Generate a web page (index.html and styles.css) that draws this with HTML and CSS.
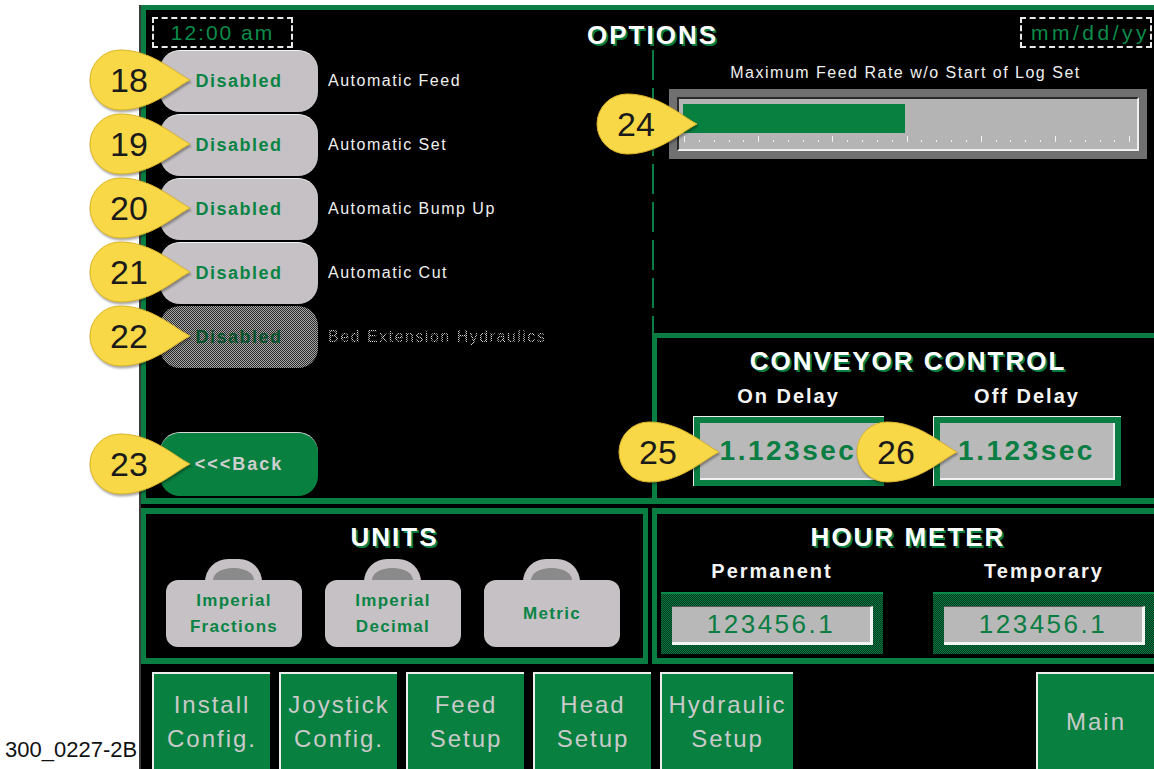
FILE: index.html
```html
<!DOCTYPE html>
<html lang="en">
<head>
<meta charset="utf-8">
<title>Options</title>
<link rel="stylesheet" href="styles.css">
</head>
<body>
<div class="page">
  <div class="caption">300_0227-2B</div>
  <div class="screen">
    <section class="options">
      <header class="opt-head">
        <div class="stamp time">12:00 am</div>
        <h1 class="title">OPTIONS</h1>
        <div class="stamp date">mm/dd/yy</div>
      </header>
      <div class="opt-body">
        <div class="opt-left">
          <div class="opt-row"><div class="pill">Disabled</div><span class="opt-label">Automatic Feed</span></div>
          <div class="opt-row"><div class="pill">Disabled</div><span class="opt-label">Automatic Set</span></div>
          <div class="opt-row"><div class="pill">Disabled</div><span class="opt-label">Automatic Bump Up</span></div>
          <div class="opt-row"><div class="pill">Disabled</div><span class="opt-label">Automatic Cut</span></div>
          <div class="opt-row"><div class="pill pill-off"><span class="dither-text-dark">Disabled</span></div><span class="opt-label dither-text">Bed Extension Hydraulics</span></div>
          <div class="back">&lt;&lt;&lt;Back</div>
        </div>
        <div class="opt-right">
          <div class="feed">
            <div class="feed-label">Maximum Feed Rate w/o Start of Log Set</div>
            <div class="slider">
              <div class="slider-track">
                <div class="slider-fill" style="width:49.3%"></div>
                <div class="ticks"></div>
              </div>
            </div>
          </div>
          <div class="conveyor">
            <h2 class="title">CONVEYOR CONTROL</h2>
            <div class="delays">
              <div class="delay d-on">
                <div class="sub">On Delay</div>
                <div class="valbox"><div class="val">1.123sec</div></div>
              </div>
              <div class="delay d-off">
                <div class="sub">Off Delay</div>
                <div class="valbox"><div class="val">1.123sec</div></div>
              </div>
            </div>
          </div>
        </div>
      </div>
    </section>

    <div class="lower">
      <section class="units">
        <h2 class="title">UNITS</h2>
        <div class="unit-row">
          <div class="unit">Imperial<br>Fractions</div>
          <div class="unit">Imperial<br>Decimal</div>
          <div class="unit">Metric</div>
        </div>
      </section>
      <section class="hours">
        <h2 class="title">HOUR METER</h2>
        <div class="meters">
          <div class="meter">
            <div class="sub">Permanent</div>
            <div class="meter-frame"><div class="meter-val">123456.1</div></div>
          </div>
          <div class="meter">
            <div class="sub">Temporary</div>
            <div class="meter-frame"><div class="meter-val">123456.1</div></div>
          </div>
        </div>
      </section>
    </div>

    <nav class="nav">
      <div class="nav-btn w118">Install<br>Config.</div>
      <div class="nav-btn w118">Joystick<br>Config.</div>
      <div class="nav-btn w118">Feed<br>Setup</div>
      <div class="nav-btn w118">Head<br>Setup</div>
      <div class="nav-btn w133">Hydraulic<br>Setup</div>
      <div class="nav-btn w118 main">Main</div>
    </nav>
  </div>

  <div class="callout c18"><svg viewBox="0 0 101 62" width="101" height="62"><path d="M101 31 C84 22 62 1 31 1 A30 30 0 0 0 31 61 C62 61 84 40 101 31 Z"/></svg><span>18</span></div>
  <div class="callout c19"><svg viewBox="0 0 101 62" width="101" height="62"><path d="M101 31 C84 22 62 1 31 1 A30 30 0 0 0 31 61 C62 61 84 40 101 31 Z"/></svg><span>19</span></div>
  <div class="callout c20"><svg viewBox="0 0 101 62" width="101" height="62"><path d="M101 31 C84 22 62 1 31 1 A30 30 0 0 0 31 61 C62 61 84 40 101 31 Z"/></svg><span>20</span></div>
  <div class="callout c21"><svg viewBox="0 0 101 62" width="101" height="62"><path d="M101 31 C84 22 62 1 31 1 A30 30 0 0 0 31 61 C62 61 84 40 101 31 Z"/></svg><span>21</span></div>
  <div class="callout c22"><svg viewBox="0 0 101 62" width="101" height="62"><path d="M101 31 C84 22 62 1 31 1 A30 30 0 0 0 31 61 C62 61 84 40 101 31 Z"/></svg><span>22</span></div>
  <div class="callout c23"><svg viewBox="0 0 101 62" width="101" height="62"><path d="M101 31 C84 22 62 1 31 1 A30 30 0 0 0 31 61 C62 61 84 40 101 31 Z"/></svg><span>23</span></div>
  <div class="callout c24"><svg viewBox="0 0 101 62" width="101" height="62"><path d="M101 31 C84 22 62 1 31 1 A30 30 0 0 0 31 61 C62 61 84 40 101 31 Z"/></svg><span>24</span></div>
  <div class="callout c25"><svg viewBox="0 0 101 62" width="101" height="62"><path d="M101 31 C84 22 62 1 31 1 A30 30 0 0 0 31 61 C62 61 84 40 101 31 Z"/></svg><span>25</span></div>
  <div class="callout c26"><svg viewBox="0 0 101 62" width="101" height="62"><path d="M101 31 C84 22 62 1 31 1 A30 30 0 0 0 31 61 C62 61 84 40 101 31 Z"/></svg><span>26</span></div>
</div>
</body>
</html>
```

FILE: styles.css
```css
html, body {
  margin: 0;
  padding: 0;
  overflow: hidden;
  background: #fff;
}
body {
  width: 1154px;
  height: 769px;
  font-family: "Liberation Sans", Arial, sans-serif;
}
.page {
  position: relative;
  display: flex;
  width: 1154px;
  height: 769px;
}
.caption {
  flex: none;
  width: 134px;
  padding-left: 5px;
  align-self: flex-end;
  margin-bottom: 6px;
  font-size: 22px;
  line-height: 26px;
  color: #111;
  white-space: nowrap;
}
.screen {
  flex: none;
  width: 1025px;
  height: 764px;
  margin-top: 5px;
  box-sizing: border-box;
  background: #000;
  border-left: 2px solid #3a3a3a;
  display: flex;
  flex-direction: column;
}

/* ---------- generic ---------- */
.title {
  margin: 0;
  font-size: 26px;
  line-height: 30px;
  font-weight: bold;
  letter-spacing: 2px;
  color: #fff;
  text-align: center;
  text-shadow: 2px 2px 0 #0a7d43;
}
.sub {
  font-size: 20px;
  line-height: 24px;
  font-weight: bold;
  letter-spacing: 2px;
  color: #f4f4f4;
  text-align: center;
}

/* ---------- options ---------- */
.options {
  flex: none;
  height: 499px;
  box-sizing: border-box;
  border: 5px solid #0a7d43;
  border-bottom-width: 6px;
  display: flex;
  flex-direction: column;
}
.opt-head {
  flex: none;
  height: 40px;
  display: grid;
  grid-template-columns: 1fr auto 1fr;
  align-items: start;
}
.stamp {
  box-sizing: border-box;
  height: 31px;
  margin-top: 7px;
  border: 2px dashed #e8e8e8;
  color: #0b8c4a;
  font-size: 21px;
  line-height: 27px;
  text-align: center;
}
.time {
  width: 141px;
  margin-left: 6px;
  letter-spacing: 2px;
}
.date {
  width: 132px;
  justify-self: end;
  margin-right: 7px;
  letter-spacing: 3.5px;
  text-align: right;
  padding-right: 0;
}
.opt-head .title {
  margin-top: 10px;
}
.opt-body {
  flex: 1;
  display: grid;
  grid-template-columns: 506px 1fr;
}
.opt-left {
  padding-left: 14px;
  display: flex;
  flex-direction: column;
  gap: 2px;
}
.opt-row {
  height: 62px;
  display: flex;
  align-items: center;
}
.pill {
  flex: none;
  box-sizing: border-box;
  width: 158px;
  height: 62px;
  border-radius: 20px;
  background: #c5c1c5;
  border-top: 1px solid #f2f2f2;
  display: flex;
  align-items: center;
  justify-content: center;
  color: #0a8444;
  font-size: 18px;
  font-weight: bold;
  letter-spacing: 1.5px;
}
.pill-off {
  background: repeating-conic-gradient(#a4a4a4 0 25%, #2c2c2c 0 50%) 0 0 / 2px 2px;
  border-top: none;
}
.dither-text-dark {
  color: #06542c;
}
.opt-label {
  margin-left: 10px;
  color: #f0f0f0;
  font-size: 16px;
  letter-spacing: 1.5px;
  white-space: nowrap;
}
.dither-text {
  color: transparent;
  background: repeating-conic-gradient(#dcdcdc 0 25%, #000 0 50%) 0 0 / 2px 2px;
  -webkit-background-clip: text;
  background-clip: text;
}
.back {
  margin-top: 62px;
  box-sizing: border-box;
  width: 158px;
  height: 64px;
  border-radius: 20px;
  background: #088040;
  border-top: 1px solid #d8d8d8;
  display: flex;
  align-items: center;
  justify-content: center;
  color: #cfcfcf;
  font-size: 18px;
  font-weight: bold;
  letter-spacing: 2px;
}
.opt-right {
  display: flex;
  flex-direction: column;
}
.feed {
  flex: none;
  height: 283px;
  box-sizing: border-box;
  padding-top: 13px;
  background: repeating-linear-gradient(to bottom, #0a7d43 0 30px, transparent 30px 38px) 0 0 / 2px 100% no-repeat;
}
.feed-label {
  color: #f0f0f0;
  font-size: 16px;
  line-height: 20px;
  letter-spacing: 1.5px;
  text-align: center;
}
.slider {
  box-sizing: border-box;
  height: 70px;
  margin: 6px 12px 0 17px;
  padding: 8px;
  background: #707070;
}
.slider-track {
  box-sizing: border-box;
  height: 100%;
  padding: 5px 4px 0;
  background: #b4b4b4;
  border-top: 2px solid #2a2a2a;
  border-left: 2px solid #2a2a2a;
  border-bottom: 2px solid #f0f0f0;
  border-right: 2px solid #f0f0f0;
}
.slider-fill {
  height: 29px;
  background: #088040;
}
.ticks {
  height: 6px;
  margin-top: 3px;
  background:
    repeating-linear-gradient(to right, #f4f4f4 0 1px, transparent 1px 74.2px) 1px 0 / 100% 6px no-repeat,
    repeating-linear-gradient(to right, #f4f4f4 0 1px, transparent 1px 14.84px) 1px 4px / 100% 2px no-repeat;
}
.conveyor {
  flex: 1;
  box-sizing: border-box;
  border-top: 5px solid #0a7d43;
  border-left: 5px solid #0a7d43;
  padding-top: 8px;
}
.delays {
  display: flex;
  gap: 49px;
  padding-left: 36px;
  margin-top: 8px;
}
.d-on { width: 191px; }
.d-off { width: 188px; }
.valbox {
  margin-top: 8px;
  box-sizing: border-box;
  height: 70px;
  padding: 6px;
  background: #0a7d43;
  border-top: 1px solid #eee;
  border-left: 1px solid #eee;
}
.val {
  box-sizing: border-box;
  height: 100%;
  background: #b9b9b9;
  border-right: 2px solid #efefef;
  border-bottom: 2px solid #efefef;
  display: flex;
  align-items: center;
  justify-content: center;
  color: #0a7d43;
  font-size: 28px;
  font-weight: bold;
  letter-spacing: 2.5px;
}

/* ---------- lower ---------- */
.lower {
  flex: none;
  height: 156px;
  margin-top: 4px;
  display: flex;
  gap: 4px;
}
.units, .hours {
  box-sizing: border-box;
  border: 5px solid #0a7d43;
  border-top-width: 6px;
  border-bottom-width: 6px;
  padding-top: 8px;
}
.units {
  flex: none;
  width: 507px;
}
.hours {
  flex: 1;
}
.unit-row {
  display: flex;
  gap: 23px;
  padding-left: 20px;
  margin-top: 8px;
  padding-top: 20px;
}
.unit {
  position: relative;
  box-sizing: border-box;
  width: 136px;
  height: 67px;
  border-radius: 12px;
  background: #c5c1c5;
  display: flex;
  align-items: center;
  justify-content: center;
  text-align: center;
  color: #0a8444;
  font-size: 17px;
  line-height: 26px;
  font-weight: bold;
  letter-spacing: 1.3px;
}
.unit::before {
  content: "";
  position: absolute;
  left: 39px;
  top: -21px;
  width: 57px;
  height: 23px;
  border-radius: 28px 28px 0 0;
  background: #c5c1c5;
}
.unit::after {
  content: "";
  position: absolute;
  left: 47px;
  top: -12px;
  width: 41px;
  height: 12px;
  border-radius: 20px 20px 0 0 / 12px 12px 0 0;
  background: #8a8a8a;
}
.meters {
  display: flex;
  gap: 50px;
  padding-left: 4px;
  margin-top: 7px;
}
.meter { width: 222px; }
.meter-frame {
  margin-top: 9px;
  box-sizing: border-box;
  height: 62px;
  padding: 12px 10px 9px 11px;
  background: repeating-conic-gradient(#0b7d43 0 25%, #03361c 0 50%) 0 0 / 2px 2px;
  border-top: 2px solid #0a8a4a;
}
.meter-val {
  box-sizing: border-box;
  height: 100%;
  background: #b8b8b8;
  border-top: 1px solid #555;
  border-right: 3px solid #f4f4f4;
  border-bottom: 3px solid #f4f4f4;
  display: flex;
  align-items: center;
  justify-content: center;
  color: #0a7d43;
  font-size: 26px;
  letter-spacing: 2.5px;
}

/* ---------- nav ---------- */
.nav {
  flex: 1;
  display: flex;
  gap: 9px;
  padding: 8px 10px 0 11px;
}
.nav-btn {
  box-sizing: border-box;
  height: 97px;
  background: #088040;
  border-top: 2px solid #eee;
  border-left: 2px solid #eee;
  display: flex;
  align-items: center;
  justify-content: center;
  text-align: center;
  color: #cacaca;
  font-size: 24px;
  line-height: 34px;
  letter-spacing: 2px;
}
.w118 { width: 118px; }
.w133 { width: 133px; }
.main { margin-left: auto; }

/* ---------- callouts ---------- */
.callout {
  position: absolute;
  width: 101px;
  height: 62px;
}
.callout svg {
  position: absolute;
  left: 0;
  top: 0;
  overflow: visible;
  filter: drop-shadow(1px 2px 1px rgba(0, 0, 0, 0.35));
}
.callout path {
  fill: #f8d846;
  stroke: #dcb42a;
  stroke-width: 1;
}
.callout span {
  position: absolute;
  left: 0;
  top: 0;
  width: 80px;
  line-height: 62px;
  text-align: center;
  font-size: 34px;
  color: #1a1a1a;
}
.c18 { left: 89px; top: 49px; }
.c19 { left: 89px; top: 113px; }
.c20 { left: 89px; top: 177px; }
.c21 { left: 89px; top: 241px; }
.c22 { left: 89px; top: 305px; }
.c23 { left: 89px; top: 433px; }
.c24 { left: 596px; top: 93px; }
.c25 { left: 618px; top: 421px; }
.c26 { left: 856px; top: 421px; }
```
